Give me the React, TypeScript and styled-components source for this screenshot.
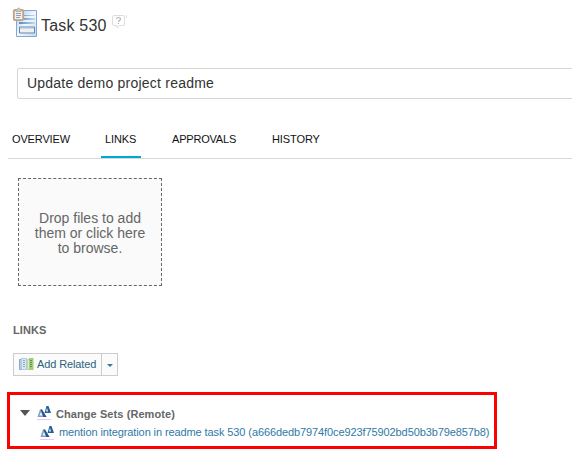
import React from 'react';
import styled, { createGlobalStyle } from 'styled-components';

const GlobalStyle = createGlobalStyle`
  * { box-sizing: border-box; }
  body {
    margin: 0;
    background: #fff;
    font-family: "Liberation Sans", Arial, sans-serif;
    font-size: 11px;
    overflow: hidden;
  }
`;

const Page = styled.main`
  width: 572px;
  height: 456px;
  overflow: hidden;
  display: flex;
  flex-direction: column;
`;

const Header = styled.header`
  height: 68px;
  flex-shrink: 0;
  padding: 7px 0 0 12px;
  display: flex;
  align-items: flex-start;
`;

const Title = styled.h1`
  margin: 9px 0 0 3px;
  font-size: 16px;
  line-height: 20px;
  font-weight: 400;
  color: #333;
  letter-spacing: 0.2px;
`;

const HelpIcon = styled.svg`
  margin: 7px 0 0 5px;
`;

const Summary = styled.div`
  height: 31px;
  flex-shrink: 0;
  margin: 0 -8px 0 17px;
  padding-left: 9px;
  border: 1px solid #d6d6d6;
  border-radius: 2px;
  font-size: 14px;
  line-height: 29px;
  letter-spacing: 0.22px;
  color: #333;
`;

const Tabs = styled.nav`
  height: 36px;
  flex-shrink: 0;
  margin: 24px 0 0 8px;
  border-bottom: 1px solid #d8d8d8;
  display: flex;
  gap: 27px;
`;

const Tab = styled.a<{ $active?: boolean; $width: number; $spacing?: number }>`
  width: ${(p) => p.$width}px;
  height: 35px;
  padding: 9px 0 0 4px;
  line-height: 14px;
  color: #111;
  white-space: nowrap;
  letter-spacing: ${(p) => p.$spacing ?? 0}px;
  border-bottom: 2px solid ${(p) => (p.$active ? '#00a9ce' : 'transparent')};
`;

const DropZone = styled.div`
  width: 144px;
  height: 108px;
  flex-shrink: 0;
  margin: 19px 0 0 18px;
  padding-top: 2px;
  display: grid;
  place-content: center;
  border: 1px dashed #666;
  background: #fafafa;
  font-size: 14px;
  line-height: 15px;
  color: #666;
  text-align: center;
`;

const SectionTitle = styled.h2`
  margin: 37px 0 0 13px;
  font-size: 11px;
  line-height: 14px;
  color: #666;
  letter-spacing: 0.1px;
`;

const SplitButton = styled.div`
  width: 105px;
  height: 23px;
  flex-shrink: 0;
  margin: 16px 0 0 13px;
  display: flex;
  border: 1px solid #ccc;
  background: #fbfbfb;
`;

const AddButton = styled.div`
  width: 88px;
  display: flex;
  align-items: center;
  gap: 3px;
  padding: 0 0 1px 5px;
  border-right: 1px solid #ccc;
  color: #2b627f;
  white-space: nowrap;
  letter-spacing: -0.12px;
`;

const MenuButton = styled.div`
  flex: 1;
  padding-top: 2px;
  display: grid;
  place-items: center;
`;

const ChangeSets = styled.section`
  width: 490px;
  height: 57px;
  flex-shrink: 0;
  margin: 16px 0 0 7px;
  padding: 10px 0 0 10px;
  border: 3px solid #f00;
`;

const DeltaSvg = styled.svg`
  flex-shrink: 0;
  margin: 0 5px 3px 0;
`;

const GroupRow = styled.div`
  height: 18px;
  display: flex;
  align-items: center;
  color: #666;
  font-weight: 700;
  letter-spacing: 0.08px;
  white-space: nowrap;
`;

const ItemRow = styled(GroupRow)`
  height: 17px;
  padding-left: 20px;
  font-weight: 400;
  letter-spacing: -0.1px;
  color: #3079a6;

  ${DeltaSvg} {
    margin: 2px 5px 0 0;
  }
`;

const Disclosure = styled.svg`
  margin: 0 7px 3px 0;
`;

const TaskIcon = () => (
  <svg width="26" height="31" viewBox="0 0 26 31">
    <defs>
      <linearGradient id="sheet" x2="1" y2="1">
        <stop stopColor="#a9c7e8" />
        <stop offset=".5" stopColor="#f4f8fc" />
        <stop offset="1" stopColor="#c5d8ed" />
      </linearGradient>
      <linearGradient id="lines">
        <stop stopColor="#4c8bce" />
        <stop offset="1" stopColor="#c5daef" />
      </linearGradient>
    </defs>
    <path d="M4.500 3.500h20v26h-20z" fill="url(#sheet)" stroke="#83a9d3" />
    <path d="M10 8h13v1H10zM12 11h11v2H12zM7 15h16v2H7z" fill="url(#lines)" />
    <path d="M7.500 20h15v6h-15z" fill="#eef0f4" stroke="#6286ac" />
    <path d="M8 20.500h14v1H8z" fill="#a9bfd4" />
    <rect x="1.800" y="2.800" width="9.400" height="10.400" rx="1.500" fill="#eef1f4" stroke="#c1a17b" strokeWidth="1.800" />
    <path d="M4 2.500h1.200C5.200.5 8 .5 8 2.500h1v2H4z" fill="#d7cabd" stroke="#b0a190" strokeWidth=".8" />
    <path d="M4 6.500h5M4 8.500h5M4 10.500h4" stroke="#91a1b1" />
  </svg>
);

const RelatedIcon = () => (
  <svg width="15" height="14" viewBox="0 0 15 14">
    <path d="M.5 2.500h3v10h-3z" fill="#b8cce0" stroke="#8ba8c6" />
    <path d="M2.500 1.500h5v11h-5z" fill="#dce8f5" stroke="#b1c8df" />
    <path d="M8.500 2.500h2v10h-2z" fill="#e2efcf" stroke="#b6d5a0" />
    <path d="M10 1h4.500v12H10z" fill="#a1ce77" />
    <path d="M4 3.500h2M4 5.500h2M4 7.500h2M4 9.500h2" stroke="#8ca6c2" />
    <path d="M11 3.500h2M11 5.500h2M11 7.500h2M11 9.500h2" stroke="#66904e" />
  </svg>
);

const DeltaIcon = () => (
  <DeltaSvg width="14" height="15" viewBox="0 0 14 15">
    <path d="M0 14.500h14" stroke="#f5c4f0" />
    <path d="M7.500 8 9.500 1H11.500L14 8z" fill="#285f98" />
    <path d="M9 6.500 10 3 11 6.500z" fill="#edf3f8" />
    <path d="M.5 12 3 4.500h2L9.500 12z" fill="#7f9fc2" />
    <path d="M3.600 4.500H5L9.500 12H6.300z" fill="#25578c" />
    <path d="M2.500 10.500 4 7 5.500 10.500z" fill="#f3f6fa" />
  </DeltaSvg>
);

export default function App() {
  return (
    <>
      <GlobalStyle />
      <Page>
        <Header>
          <TaskIcon />
          <Title>Task 530</Title>
          <HelpIcon width="15" height="15" viewBox="0 0 15 15">
            <path d="M2 1.500h9q1.500 0 1.500 1.500v7q0 1.500-1.500 1.500H7.500L5 14v-2.500H2Q.5 11.500.5 10V3Q.5 1.500 2 1.500z" fill="#fff" stroke="#dedede" />
            <path d="M4.500 5C4.500 3 8.500 3 8.500 5c0 1.300-2 1.300-2 3M6.500 9v1" fill="none" stroke="#b5b5b5" strokeWidth="1.200" />
            <path d="M14.500 1v3" stroke="#cfe4f2" />
          </HelpIcon>
        </Header>
        <Summary>Update demo project readme</Summary>
        <Tabs>
          <Tab $width={66} $spacing={-0.15}>OVERVIEW</Tab>
          <Tab $width={40} $spacing={-0.1} $active>LINKS</Tab>
          <Tab $width={73} $spacing={-0.2}>APPROVALS</Tab>
          <Tab $width={56} $spacing={-0.1}>HISTORY</Tab>
        </Tabs>
        <DropZone>
          <span>Drop files to add<br />them or click here<br />to browse.</span>
        </DropZone>
        <SectionTitle>LINKS</SectionTitle>
        <SplitButton>
          <AddButton><RelatedIcon />Add Related</AddButton>
          <MenuButton>
            <svg width="6" height="3" viewBox="0 0 6 3"><path d="M0 0h6L3 3z" fill="#33789c" /></svg>
          </MenuButton>
        </SplitButton>
        <ChangeSets>
          <GroupRow>
            <Disclosure width="10" height="6" viewBox="0 0 10 6"><path d="M0 0h10L5 6z" fill="#555" /></Disclosure>
            <DeltaIcon />
            Change Sets (Remote)
          </GroupRow>
          <ItemRow>
            <DeltaIcon />
            mention integration in readme task 530 (a666dedb7974f0ce923f75902bd50b3b79e857b8)
          </ItemRow>
        </ChangeSets>
      </Page>
    </>
  );
}
